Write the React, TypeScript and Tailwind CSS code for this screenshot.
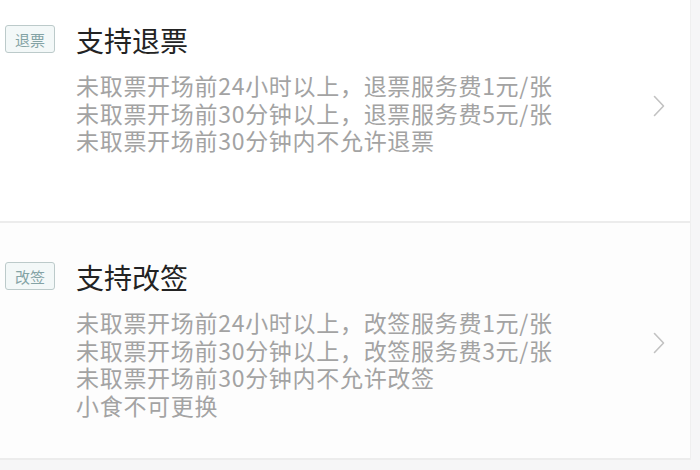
type Rule = {
  tag: string;
  title: string;
  lines: string[];
};

const rules: Rule[] = [
  {
    tag: "退票",
    title: "支持退票",
    lines: [
      "未取票开场前24小时以上，退票服务费1元/张",
      "未取票开场前30分钟以上，退票服务费5元/张",
      "未取票开场前30分钟内不允许退票",
    ],
  },
  {
    tag: "改签",
    title: "支持改签",
    lines: [
      "未取票开场前24小时以上，改签服务费1元/张",
      "未取票开场前30分钟以上，改签服务费3元/张",
      "未取票开场前30分钟内不允许改签",
      "小食不可更换",
    ],
  },
];

const Chevron = () => (
  <svg width="12" height="22" viewBox="0 0 12 22" fill="none" stroke="#c2c2c2" strokeWidth="1.6" strokeLinecap="round" strokeLinejoin="round">
    <polyline points="1.5,1.5 10.5,11 1.5,20.5" />
  </svg>
);

const RuleCard = ({ rule, className }: { rule: Rule; className: string }) => (
  <div className={`flex items-start ${className}`}>
    {/* Tag */}
    <div className="w-[76px] shrink-0 pl-[5px] pt-[2px]">
      <span className="inline-flex h-[28px] w-[50px] items-center justify-center rounded-[3px] border-[1.5px] border-[#bccaca] bg-[#f3f8f8] text-[15px] leading-none text-[#84a3a5]">
        {rule.tag}
      </span>
    </div>

    {/* Title + details */}
    <div className="flex-1">
      <h2 className="text-[28px] leading-[34px] text-[#232323]">{rule.title}</h2>
      <div className="mt-[15px] text-[23px] leading-[27.5px] tracking-[0.7px] text-[#a3a3a3]">
        {rule.lines.map((l) => (
          <p key={l}>{l}</p>
        ))}
      </div>
    </div>

    <div className="w-[49px] shrink-0 pl-[12px] pt-[72px]">
      <Chevron />
    </div>
  </div>
);

export default function App() {
  return (
    <div
      className="h-[470px] w-[700px] overflow-hidden bg-[#f6f6f7]"
      style={{ fontFamily: '"Noto Sans CJK SC", "Noto Sans", sans-serif' }}
    >
      <div className="flex h-[460px] w-[691px] flex-col border-r border-[#efefef] bg-white">
        <RuleCard rule={rules[0]} className="h-[223px] border-b-[2px] border-[#ececec] pt-[23px]" />
        <RuleCard rule={rules[1]} className="flex-1 border-b-[2px] border-[#ececec] bg-[#fdfdfd] pt-[37px]" />
      </div>
    </div>
  );
}
